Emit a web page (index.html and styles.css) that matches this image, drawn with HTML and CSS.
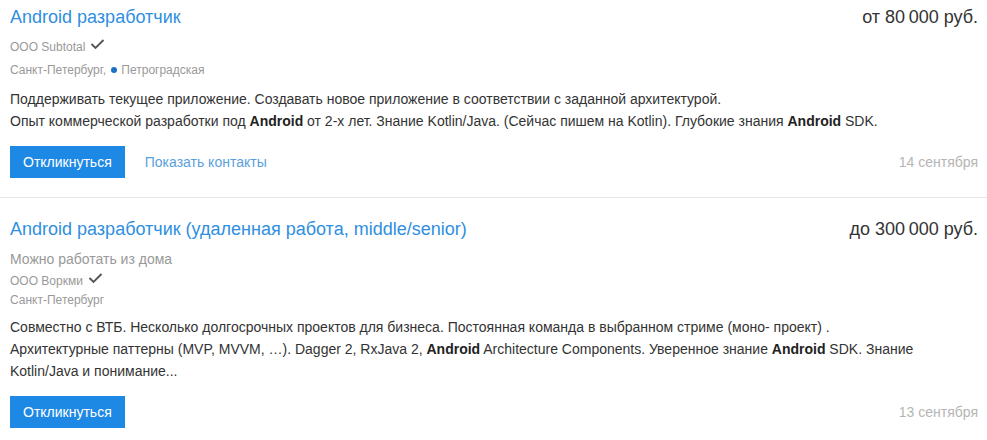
FILE: index.html
```html
<!DOCTYPE html>
<html lang="ru">
<head>
<meta charset="utf-8">
<title>Вакансии</title>
<link rel="stylesheet" href="styles.css">
</head>
<body>
<div class="list">
  <div class="vacancy">
    <div class="head">
      <a class="title" href="#">Android разработчик</a>
      <div class="salary">от 80&#8201;000 руб.</div>
    </div>
    <div class="company">ООО Subtotal <svg class="check" width="15" height="11" viewBox="0 0 15 11"><path d="M1.5 5 L5.5 9 L13.5 1" fill="none" stroke="#555" stroke-width="1.9"/></svg></div>
    <div class="location location--metro">Санкт-Петербург, <span class="metro"></span>Петроградская</div>
    <div class="desc">Поддерживать текущее приложение. Создавать новое приложение в соответствии с заданной архитектурой.<br>Опыт коммерческой разработки под <b>Android</b> от 2-х лет. Знание Kotlin/Java. (Сейчас пишем на Kotlin). Глубокие знания <b>Android</b> SDK.</div>
    <div class="actions">
      <button class="btn">Откликнуться</button>
      <a class="contacts" href="#">Показать контакты</a>
      <span class="date">14 сентября</span>
    </div>
  </div>
  <div class="vacancy">
    <div class="head">
      <a class="title" href="#">Android разработчик (удаленная работа, middle/senior)</a>
      <div class="salary">до 300&#8201;000 руб.</div>
    </div>
    <div class="remote">Можно работать из дома</div>
    <div class="company">ООО Воркми <svg class="check" width="15" height="11" viewBox="0 0 15 11"><path d="M1.5 5 L5.5 9 L13.5 1" fill="none" stroke="#555" stroke-width="1.9"/></svg></div>
    <div class="location">Санкт-Петербург</div>
    <div class="desc">Совместно с ВТБ. Несколько долгосрочных проектов для бизнеса. Постоянная команда в выбранном стриме (моно- проект) .<br>Архитектурные паттерны (MVP, MVVM, …). Dagger 2, RxJava 2, <b>Android</b> Architecture Components. Уверенное знание <b>Android</b> SDK. Знание Kotlin/Java и понимание...</div>
    <div class="actions">
      <button class="btn">Откликнуться</button>
      <span class="date">13 сентября</span>
    </div>
  </div>
</div>
</body>
</html>
```
FILE: styles.css
```css
html, body {
  margin: 0;
  padding: 0;
  background: #fff;
}
body {
  font-family: "Liberation Sans", Arial, sans-serif;
  color: #333;
  overflow: hidden;
}
.list {
  margin-top: -14px;
}
.vacancy {
  padding: 20px 9px 19px 10px;
  border-bottom: 1px solid #e6e6e6;
}
.head {
  display: flex;
  justify-content: space-between;
  align-items: baseline;
  font-size: 18px;
  line-height: 22px;
}
.title {
  color: #2f8fe0;
  text-decoration: none;
}
.salary {
  color: #333;
  white-space: nowrap;
}
.remote {
  margin-top: 9px;
  font-size: 14px;
  line-height: 20px;
  color: #999;
}
.company {
  margin-top: 10px;
  font-size: 12px;
  line-height: 18px;
  color: #999;
  display: flex;
  align-items: center;
  gap: 5px;
}
.remote + .company {
  margin-top: 3px;
}
.check {
  position: relative;
  top: -3px;
}
.location {
  margin-top: 1px;
  font-size: 12px;
  line-height: 18px;
  color: #999;
}
.location--metro {
  margin-top: 5px;
}
.metro {
  display: inline-block;
  width: 6px;
  height: 6px;
  border-radius: 50%;
  background: #1a72c4;
  margin: 0 4px 0 2px;
  vertical-align: 1px;
}
.desc {
  margin-top: 7px;
  font-size: 14px;
  line-height: 22px;
  color: #333;
}
.location--metro + .desc {
  margin-top: 9px;
}
.desc b {
  font-weight: bold;
  color: #222;
}
.actions {
  margin-top: 14px;
  display: flex;
  align-items: center;
}
.btn {
  height: 32px;
  padding: 0 13px;
  border: none;
  border-radius: 0;
  background: #1e88e5;
  color: #fff;
  font-family: inherit;
  font-size: 14px;
  cursor: pointer;
}
.contacts {
  margin-left: 20px;
  font-size: 14px;
  color: #5a9fdc;
  text-decoration: none;
}
.date {
  margin-left: auto;
  font-size: 14px;
  color: #b5b5b5;
}
```
